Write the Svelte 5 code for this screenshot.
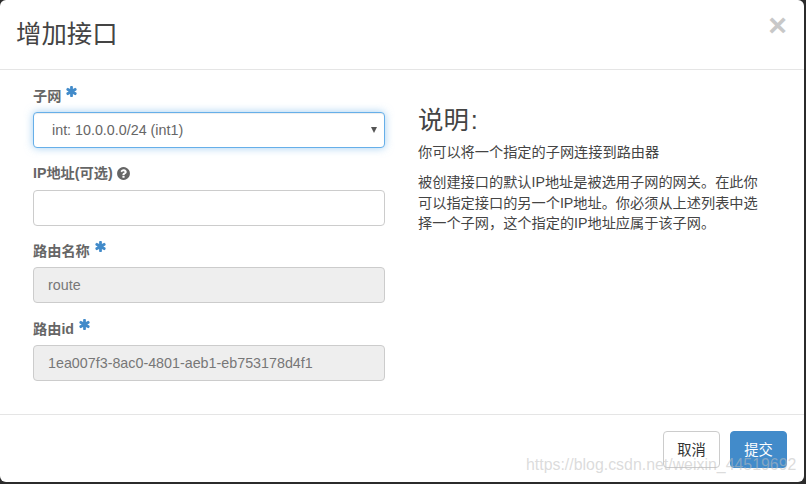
<script>
	const star = 'M1546 1050q46 26 59.5 77.5t-12.5 97.5l-64 110q-26 46-77.5 59.5t-97.5-12.5l-266-153v307q0 52-38 90t-90 38h-128q-52 0-90-38t-38-90v-307l-266 153q-46 26-97.5 12.5t-77.5-59.5l-64-110q-26-46-12.5-97.5t59.5-77.5l266-154-266-154q-46-26-59.5-77.5t12.5-97.5l64-110q26-46 77.5-59.5t97.5 12.5l266 153v-307q0-52 38-90t90-38h128q52 0 90 38t38 90v307l266-153q46-26 97.5-12.5t77.5 59.5l64 110q26 46 12.5 97.5t-59.5 77.5l-266 154z';
	const help = 'M1024 1376v-192q0-14-9-23t-23-9h-192q-14 0-23 9t-9 23v192q0 14 9 23t23 9h192q14 0 23-9t9-23zm256-672q0-88-55.5-163t-138.5-116-170-41q-243 0-371 213-15 24 8 42l132 100q7 6 19 6 16 0 25-12 53-68 86-92 34-24 86-24 48 0 85.5 26t37.5 59q0 38-20 61t-68 45q-63 28-115.5 86.5t-52.5 125.5v36q0 14 9 23t23 9h192q14 0 23-9t9-23q0-19 21.5-49.5t54.5-49.5q32-18 49-28.5t46-35 44.5-48 28-60.5 12.5-81zm384 192q0 209-103 385.5t-279.5 279.5-385.5 103-385.5-103-279.5-279.5-103-385.5 103-385.5 279.5-279.5 385.5-103 385.5 103 279.5 279.5 103 385.5z';
</script>

<div class="modal">
	<header>
		<h3>增加接口</h3>
		<span class="close">×</span>
	</header>
	<div class="body">
		<form>
			<div class="group">
				<label for="subnet">子网
					<svg class="star" viewBox="0 0 1792 1792"><path d={star} /></svg>
				</label>
				<div class="select-wrap">
					<select id="subnet">
						<option>int: 10.0.0.0/24 (int1)</option>
					</select>
					<span class="arrow"></span>
				</div>
			</div>
			<div class="group">
				<label for="ip">IP地址(可选)
					<svg class="help" viewBox="0 0 1792 1792"><path d={help} /></svg>
				</label>
				<input id="ip" type="text" />
			</div>
			<div class="group">
				<label for="name">路由名称
					<svg class="star" viewBox="0 0 1792 1792"><path d={star} /></svg>
				</label>
				<input id="name" type="text" value="route" readonly />
			</div>
			<div class="group">
				<label for="rid">路由id
					<svg class="star" viewBox="0 0 1792 1792"><path d={star} /></svg>
				</label>
				<input id="rid" type="text" value="1ea007f3-8ac0-4801-aeb1-eb753178d4f1" readonly />
			</div>
		</form>
		<aside>
			<h3>说明<span class="colon">:</span></h3>
			<p>你可以将一个指定的子网连接到路由器</p>
			<p>被创建接口的默认IP地址是被选用子网的网关。在此你可以指定接口的另一个IP地址。你必须从上述列表中选择一个子网，这个指定的IP地址应属于该子网。</p>
		</aside>
	</div>
	<footer>
		<button class="cancel" type="button">取消</button>
		<button class="submit" type="button">提交</button>
	</footer>
	<span class="watermark">https://blog.csdn.net/weixin_44519692</span>
</div>

<style>
	:global(body) {
		background: #2b2b2b;
		overflow: hidden;
	}
	.modal {
		position: relative;
		box-sizing: border-box;
		width: 804px;
		height: 482px;
		background: #fff;
		border-radius: 6px;
		font-family: "Liberation Sans", "Noto Sans CJK SC", sans-serif;
		font-size: 14.2px;
		color: #333;
	}
	header {
		box-sizing: border-box;
		height: 70px;
		padding: 0 17px 0 16px;
		display: flex;
		justify-content: space-between;
		border-bottom: 1px solid #e5e5e5;
	}
	header h3 {
		margin: 16px 0 0;
		font-size: 25.4px;
		font-weight: 400;
		line-height: 36px;
		color: #444;
	}
	.close {
		margin-top: 7px;
		font-size: 32px;
		font-weight: 700;
		line-height: 36px;
		color: #c8c8c8;
	}
	.body {
		box-sizing: border-box;
		height: 345px;
		padding: 15px 0 0 33px;
		display: flex;
		gap: 33px;
		border-bottom: 1px solid #e5e5e5;
	}
	form {
		width: 352px;
		flex: none;
	}
	.group {
		margin-bottom: 14.67px;
	}
	label {
		display: block;
		height: 21px;
		margin-bottom: 6px;
		font-weight: 700;
		line-height: 21px;
		color: #666;
	}
	.star {
		width: 13px;
		height: 13px;
		margin-left: 0;
		vertical-align: 3px;
		fill: #428bca;
	}
	.help {
		width: 15px;
		height: 15px;
		margin-left: -1px;
		vertical-align: -3px;
		fill: #666;
	}
	.select-wrap {
		position: relative;
	}
	.arrow {
		position: absolute;
		right: 8px;
		top: 15px;
		border-left: 3px solid transparent;
		border-right: 3px solid transparent;
		border-top: 6px solid #555;
	}
	select, input {
		display: block;
		box-sizing: border-box;
		width: 100%;
		height: 36px;
		border: 1px solid #ccc;
		border-radius: 4px;
		background: #fff;
		font-family: inherit;
		font-size: 14.3px;
		color: #666;
		padding: 0 14px;
		outline: none;
		appearance: none;
	}
	select {
		padding-left: 18px;
		border-color: #66afe9;
		box-shadow: inset 0 1px 1px rgba(0, 0, 0, .075), 0 0 8px rgba(102, 175, 233, .6);
	}
	input[readonly] {
		background: #eee;
		color: #777;
	}
	aside {
		width: 345px;
	}
	aside h3 {
		margin: 20px 0 7px;
		font-size: 25.4px;
		font-weight: 400;
		line-height: 30px;
		height: 30px;
		color: #444;
	}
	.colon {
		margin-left: 2px;
	}
	aside p {
		margin: 0 0 10px;
		line-height: 20.3px;
		font-size: 14.2px;
		color: #444;
	}
	footer {
		box-sizing: border-box;
		padding: 16px 17px 0;
		display: flex;
		justify-content: flex-end;
		gap: 10px;
	}
	button {
		box-sizing: border-box;
		width: 57px;
		height: 37px;
		border: 1px solid #ccc;
		border-radius: 4px;
		font-family: inherit;
		font-size: 14.3px;
		padding: 0 0 3px;
	}
	.cancel {
		background: #fff;
		color: #333;
	}
	.submit {
		background: #428bca;
		border-color: #428bca;
		color: #fff;
	}
	.watermark {
		position: absolute;
		left: 526px;
		top: 456px;
		font-size: 15.9px;
		color: rgba(190, 190, 190, .55);
		white-space: nowrap;
	}
</style>
